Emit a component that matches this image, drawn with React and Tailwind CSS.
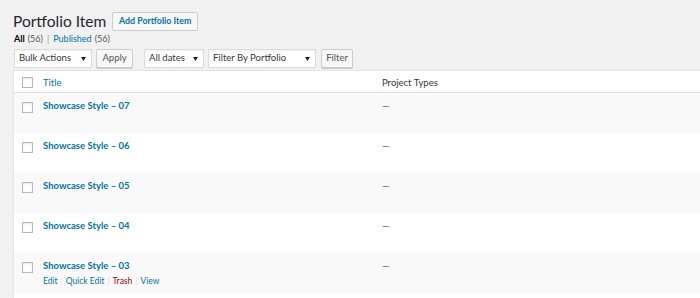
import React from "react";

const F = { fontFamily: 'Lato, "Open Sans", Arial, sans-serif' };

function Checkbox({ className = "" }) {
  return (
    <div
      className={`w-[11px] h-[11px] border border-[#b4b9be] bg-white shadow-[inset_0_1px_2px_rgba(0,0,0,0.1)] ${className}`}
    />
  );
}

function Select({ label, width }) {
  return (
    <div
      className={`h-[19px] ${width} bg-white border border-[#ddd] shadow-[inset_0_1px_2px_rgba(0,0,0,0.07)] flex items-center justify-between pl-[4px] pr-[5px] text-[9.5px] text-[#32373c]`}
    >
      <span>{label}</span>
      <svg width="5" height="4" viewBox="0 0 5 4">
        <path d="M0 0 L5 0 L2.5 4 Z" fill="#222" />
      </svg>
    </div>
  );
}

function Button({ label, width }) {
  return (
    <div
      className={`h-[19px] ${width} bg-[#f7f7f7] border border-[#ccc] rounded-[2px] shadow-[0_1px_0_#ccc] flex items-center justify-center text-[9.5px] text-[#555]`}
    >
      {label}
    </div>
  );
}

function Sep() {
  return <span className="text-[#ddd] mx-[3px]">|</span>;
}

function Row({ title, alt, actions, empty }) {
  return (
    <div className={`flex h-[40px] ${alt ? "bg-[#f9f9f9]" : "bg-white"}`}>
      {!empty && (
        <>
          <div className="w-[29px] pl-[8px] pt-[9px]">
            <Checkbox />
          </div>
          <div className="w-[339px] pt-[6px]">
            <div className="text-[9.5px] leading-[14px] font-bold text-[#0073aa]">{title}</div>
            {actions && (
              <div className="text-[8.5px] leading-[13px] text-[#0073aa] mt-[2px] flex items-center">
                <span>Edit</span>
                <Sep />
                <span>Quick Edit</span>
                <Sep />
                <span className="text-[#a00]">Trash</span>
                <Sep />
                <span>View</span>
              </div>
            )}
          </div>
          <div className="pt-[6px] text-[9.5px] leading-[14px] text-[#555]">—</div>
        </>
      )}
    </div>
  );
}

export default function App() {
  return (
    <div style={F} className="w-[700px] h-[298px] bg-[#f1f1f1] overflow-hidden text-[#23282d]">
      <div className="pl-[13px] pt-[9px]">
        <div className="flex items-center">
          <h1 className="text-[15.5px] leading-[24px] font-normal text-[#23282d]">Portfolio Item</h1>
          <div className="ml-[6px] h-[19px] w-[86px] border border-[#ccc] bg-[#f7f7f7] rounded-[2px] flex items-center justify-center text-[8.8px] font-bold text-[#0073aa]">
            Add Portfolio Item
          </div>
        </div>
        <div className="flex items-center text-[9px] leading-[12px] pl-[1px]">
          <span className="font-bold text-[#000]">All</span>
          <span className="text-[#555] ml-[3px]">(56)</span>
          <span className="text-[#999] mx-[4px]">|</span>
          <span className="text-[#0073aa]">Published</span>
          <span className="text-[#555] ml-[3px]">(56)</span>
        </div>
        <div className="flex items-center mt-[4px] pl-[1px]">
          <Select label="Bulk Actions" width="w-[78px]" />
          <div className="ml-[4px]">
            <Button label="Apply" width="w-[37px]" />
          </div>
          <div className="ml-[11px]">
            <Select label="All dates" width="w-[60px]" />
          </div>
          <div className="ml-[4px]">
            <Select label="Filter By Portfolio" width="w-[108px]" />
          </div>
          <div className="ml-[5px]">
            <Button label="Filter" width="w-[32px]" />
          </div>
        </div>
        <div className="mt-[2px] w-[720px] border border-[#e5e5e5] bg-white shadow-[0_1px_1px_rgba(0,0,0,0.04)]">
          <div className="flex h-[22px] border-b border-[#e1e1e1]">
            <div className="w-[29px] pl-[8px] pt-[6px]">
              <Checkbox />
            </div>
            <div className="w-[339px] pt-[4px] text-[9.5px] leading-[15px] text-[#0073aa]">Title</div>
            <div className="pt-[4px] text-[9.5px] leading-[15px] text-[#32373c]">Project Types</div>
          </div>
          <Row title="Showcase Style – 07" alt />
          <Row title="Showcase Style – 06" />
          <Row title="Showcase Style – 05" alt />
          <Row title="Showcase Style – 04" />
          <Row title="Showcase Style – 03" alt actions />
          <Row empty />
        </div>
      </div>
    </div>
  );
}
